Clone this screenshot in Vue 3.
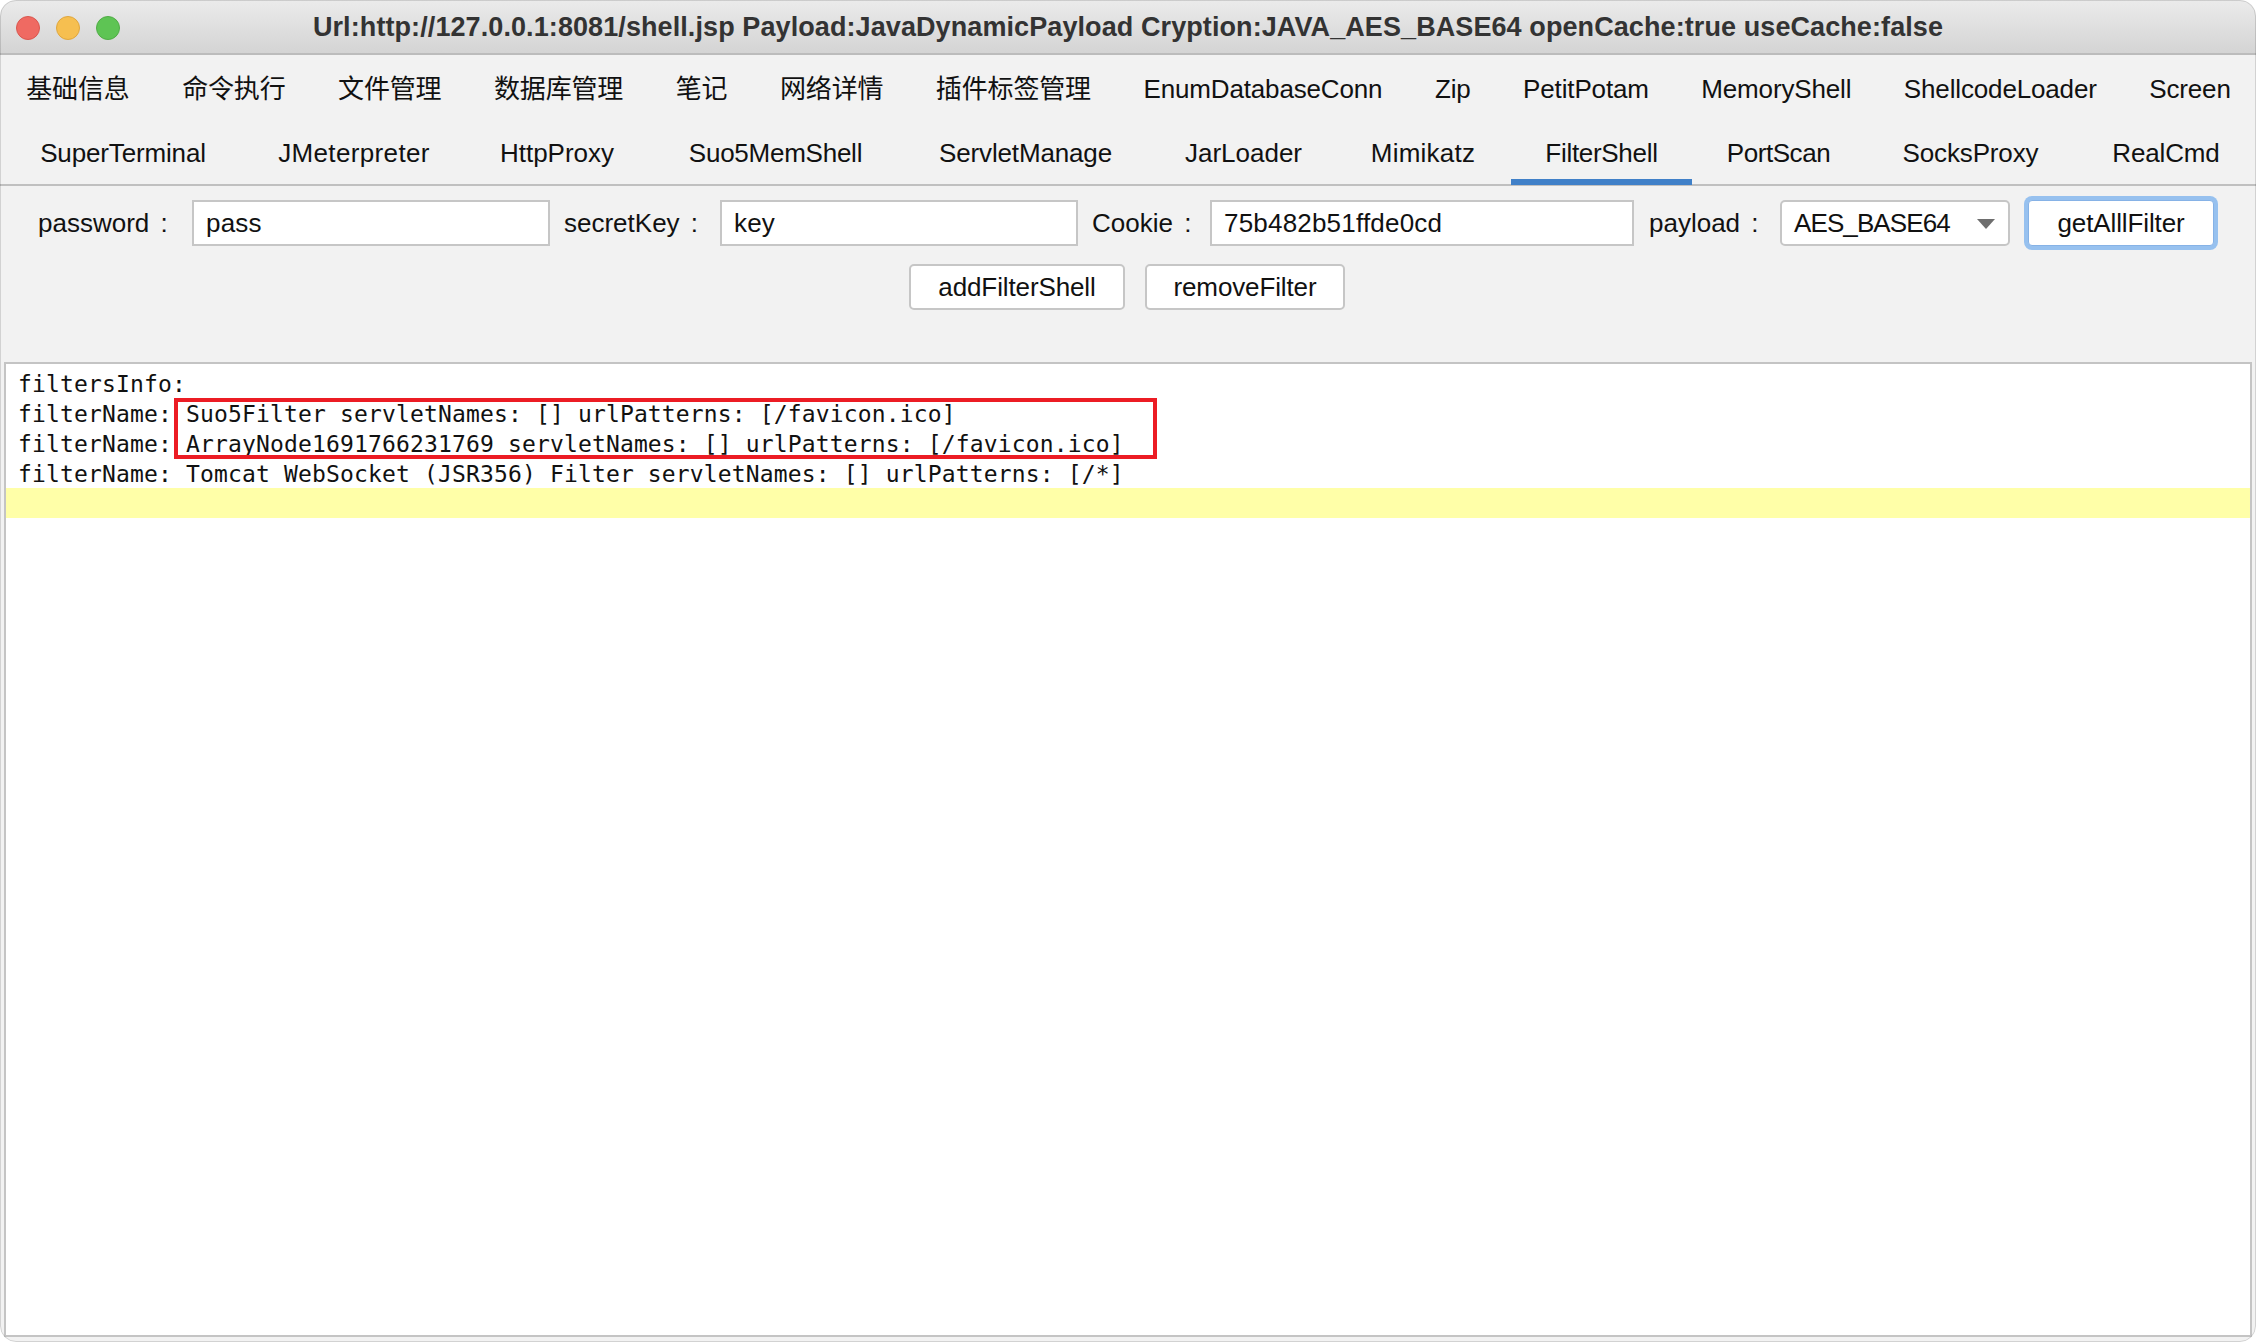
<script setup>
const row1 = ['基础信息','命令执行','文件管理','数据库管理','笔记','网络详情','插件标签管理','EnumDatabaseConn','Zip','PetitPotam','MemoryShell','ShellcodeLoader','Screen']
const row2 = [
  { t: 'SuperTerminal', w: 246, ls: -0.15 },
  { t: 'JMeterpreter', w: 216, ls: 0.35 },
  { t: 'HttpProxy', w: 190, ls: 0 },
  { t: 'Suo5MemShell', w: 247, ls: -0.25 },
  { t: 'ServletManage', w: 253, ls: -0.15 },
  { t: 'JarLoader', w: 183, ls: 0 },
  { t: 'Mimikatz', w: 176, ls: 0.25 },
  { t: 'FilterShell', w: 181, ls: -0.3 },
  { t: 'PortScan', w: 173, ls: -0.45 },
  { t: 'SocksProxy', w: 211, ls: -0.15 },
  { t: 'RealCmd', w: 180, ls: -0.15 }
]
const lines = [
  'filtersInfo:',
  'filterName: Suo5Filter servletNames: [] urlPatterns: [/favicon.ico]',
  'filterName: ArrayNode1691766231769 servletNames: [] urlPatterns: [/favicon.ico]',
  'filterName: Tomcat WebSocket (JSR356) Filter servletNames: [] urlPatterns: [/*]'
]
</script>

<template>
  <div class="window">
    <header class="titlebar">
      <div class="lights">
        <span class="light red"></span>
        <span class="light yellow"></span>
        <span class="light green"></span>
      </div>
      <div class="title">Url:http://127.0.0.1:8081/shell.jsp Payload:JavaDynamicPayload Cryption:JAVA_AES_BASE64 openCache:true useCache:false</div>
    </header>
    <nav class="tabs">
      <div class="tabrow">
        <div v-for="t in row1" :key="t" class="tab top">{{ t }}</div>
      </div>
      <div class="tabrow">
        <div
          v-for="x in row2"
          :key="x.t"
          class="tab"
          :class="{ active: x.t === 'FilterShell' }"
          :style="{ width: x.w + 'px', letterSpacing: x.ls + 'px' }"
        >{{ x.t }}</div>
      </div>
    </nav>
    <section class="form">
      <div class="formrow">
        <label class="lab l1">password :</label>
        <div class="input i1">pass</div>
        <label class="lab l2">secretKey :</label>
        <div class="input i2">key</div>
        <label class="lab l3">Cookie :</label>
        <div class="input i3">75b482b51ffde0cd</div>
        <label class="lab l4">payload :</label>
        <div class="select">
          <span>AES_BASE64</span>
          <i class="caret"></i>
        </div>
        <div class="btn focused">getAlllFilter</div>
      </div>
      <div class="actions">
        <div class="btn add">addFilterShell</div>
        <div class="btn remove">removeFilter</div>
      </div>
    </section>
    <main class="output">
      <div v-for="(l, i) in lines" :key="i" class="line">{{ l }}</div>
      <div class="line current"></div>
      <div class="redbox"></div>
    </main>
  </div>
</template>

<style>
html, body { margin: 0; background: #fff; }
</style>

<style scoped>
.window {
  width: 2256px;
  height: 1342px;
  box-sizing: border-box;
  background: #f2f2f2;
  display: flex;
  flex-direction: column;
  overflow: hidden;
  border-radius: 16px;
  position: relative;
  font-family: "Liberation Sans", "Noto Sans CJK SC", sans-serif;
  color: #111;
}
.window::after {
  content: "";
  position: absolute;
  inset: 0;
  border: 1px solid rgba(0, 0, 0, 0.13);
  border-radius: 16px;
  pointer-events: none;
}
.titlebar {
  height: 55px;
  flex: none;
  box-sizing: border-box;
  border-bottom: 2px solid #bcbcbc;
  background: linear-gradient(#ebebeb, #d4d4d4);
  position: relative;
  display: flex;
  align-items: center;
  justify-content: center;
  padding-top: 1px;
}
.lights {
  position: absolute;
  left: 16px;
  top: 16px;
  display: flex;
  gap: 16px;
}
.light {
  width: 24px;
  height: 24px;
  border-radius: 50%;
  box-sizing: border-box;
}
.red { background: #ef6a62; border: 1px solid #d9574f; }
.yellow { background: #f6bf50; border: 1px solid #dfa63e; }
.green { background: #5ec454; border: 1px solid #50ac46; }
.title {
  font-size: 27px;
  font-weight: 700;
  color: #333;
  white-space: nowrap;
  letter-spacing: 0.09px;
}
.tabs {
  flex: none;
  height: 131px;
  box-sizing: border-box;
  border-bottom: 2px solid #c0c0c0;
  padding-top: 1px;
}
.tabrow {
  display: flex;
  height: 64px;
}
.tab {
  flex: none;
  text-align: center;
  line-height: 66px;
  font-size: 26px;
  white-space: nowrap;
  box-sizing: border-box;
  position: relative;
}
.tab.top {
  padding: 0 26.25px;
  letter-spacing: -0.15px;
}
.tab.active::after {
  content: "";
  position: absolute;
  left: 0;
  right: 0;
  bottom: -1px;
  height: 6px;
  background: #4080c8;
}
.form {
  flex: none;
  height: 177px;
  box-sizing: border-box;
  padding-top: 14px;
}
.formrow {
  display: flex;
  align-items: center;
  height: 46px;
  padding-left: 38px;
}
.lab {
  font-size: 26px;
  word-spacing: 4px;
  white-space: nowrap;
}
.l1 { width: 154px; }
.l2 { width: 156px; margin-left: 14px; }
.l3 { width: 118px; margin-left: 14px; }
.l4 { width: 131px; margin-left: 15px; }
.input, .select {
  height: 46px;
  box-sizing: border-box;
  border: 2px solid #c6c6c6;
  background: #fff;
  font-size: 26px;
  letter-spacing: 0.2px;
  line-height: 42px;
  padding-left: 12px;
}
.i1 { width: 358px; }
.i2 { width: 358px; }
.i3 { width: 424px; }
.select {
  width: 230px;
  border-radius: 5px;
  position: relative;
  margin-right: 18px;
  letter-spacing: -0.9px;
}
.caret {
  position: absolute;
  right: 13px;
  top: 17px;
  width: 0;
  height: 0;
  border-left: 9px solid transparent;
  border-right: 9px solid transparent;
  border-top: 10px solid #6e6e6e;
}
.btn {
  height: 46px;
  box-sizing: border-box;
  border: 2px solid #c6c6c6;
  border-radius: 5px;
  background: #fff;
  font-size: 26px;
  letter-spacing: -0.12px;
  line-height: 42px;
  text-align: center;
  white-space: nowrap;
}
.btn.focused {
  width: 186px;
  border: 1px solid #86b2e6;
  line-height: 44px;
  box-shadow: 0 0 0 4px #97c1ef;
  border-radius: 4px;
}
.actions {
  display: flex;
  gap: 20px;
  margin-top: 18px;
  padding-left: 909px;
}
.add { width: 216px; }
.remove { width: 200px; }
.output {
  flex: none;
  margin: -1px 4px 0;
  height: 975px;
  box-sizing: border-box;
  border: 2px solid #c4c4c4;
  background: #fff;
  position: relative;
  padding-top: 4px;
}
.line {
  height: 30px;
  box-sizing: border-box;
  padding-top: 1px;
  line-height: 30px;
  padding-left: 12px;
  font-family: "DejaVu Sans Mono", monospace;
  font-size: 23px;
  letter-spacing: 0.15px;
  white-space: pre;
  color: #111;
}
.line.current { background: #ffffa8; }
.redbox {
  position: absolute;
  left: 168px;
  top: 34px;
  width: 983px;
  height: 61px;
  box-sizing: border-box;
  border: 4px solid #ec1c24;
}
</style>
